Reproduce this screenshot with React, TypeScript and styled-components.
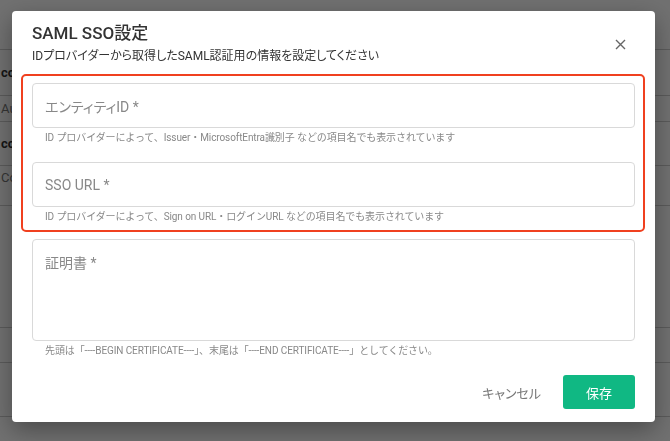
import * as React from "react";
import styled, { createGlobalStyle } from "styled-components";

const GlobalStyle = createGlobalStyle`
	html, body {
		margin: 0;
		padding: 0;
		width: 670px;
		height: 441px;
		overflow: hidden;
		background: #fff;
	}
	* {
		box-sizing: border-box;
	}
	body {
		font-family: Roboto, "Noto Sans CJK JP", sans-serif;
	}
`;

const font = `Roboto, "Noto Sans CJK JP", sans-serif`;

// background page behind the modal
const Page = styled.div`
	width: 670px;
	height: 441px;
	background: #fff;
	font-family: ${font};
	color: #333;
`;

const TableRow = styled.div<{ $h: number; $bold?: boolean; $top?: boolean }>`
	height: ${(p) => p.$h}px;
	border-bottom: 1px solid #cdcdcd;
	display: flex;
	align-items: ${(p) => (p.$top ? "flex-start" : "center")};
	padding: ${(p) => (p.$top ? "4px 0 0 1px" : "0 0 0 1px")};
	font-size: 13px;
	font-weight: ${(p) => (p.$bold ? 700 : 400)};
	color: ${(p) => (p.$bold ? "#333" : "#777")};
	overflow: hidden;
	white-space: nowrap;
`;

const Overlay = styled.div`
	position: fixed;
	inset: 0;
	background: rgba(0, 0, 0, 0.56);
`;

const Dialog = styled.div`
	position: absolute;
	top: 11px;
	left: 12px;
	width: 643px;
	height: 411px;
	background: #fff;
	border-radius: 4px;
	box-shadow: 0 8px 24px rgba(0, 0, 0, 0.35);
	padding: 10px 20px 13px;
	display: flex;
	flex-direction: column;
	font-family: ${font};
`;

const Header = styled.div`
	display: flex;
	justify-content: space-between;
	align-items: flex-start;
	font-feature-settings: "palt";
`;

const Title = styled.h2`
	margin: 0;
	font-size: 17px;
	line-height: 24px;
	font-weight: 500;
	color: #333;
`;

const Subtitle = styled.p`
	margin: 2px 0 0;
	font-size: 12px;
	line-height: 18px;
	color: #333;
`;

const CloseButton = styled.button`
	border: none;
	background: none;
	padding: 0;
	margin: 17px 9px 0 0;
	width: 12px;
	height: 12px;
	display: flex;
	align-items: center;
	justify-content: center;
	cursor: pointer;
`;

const Highlight = styled.div`
	margin: 9px -10px 0 -11px;
	padding: 7px 8px 6px 9px;
	border: 2px solid #f0401f;
	border-radius: 5px;
	display: flex;
	flex-direction: column;
	gap: 17px;
`;

const Field = styled.div<{ $mt?: number }>`
	margin-top: ${(p) => p.$mt ?? 0}px;
	display: flex;
	flex-direction: column;
`;

const Input = styled.div`
	height: 45px;
	border: 1px solid #d9d9d9;
	border-radius: 4px;
	padding: 0 12px;
	display: flex;
	align-items: center;
	font-size: 14px;
	color: #888;
	font-feature-settings: "palt";
`;

const TextArea = styled.div`
	height: 102px;
	border: 1px solid #d9d9d9;
	border-radius: 4px;
	padding: 13px 12px;
	font-size: 14px;
	line-height: 20px;
	color: #888;
`;

const Helper = styled.div`
	margin-top: 3px;
	padding-left: 13px;
	font-size: 10px;
	line-height: 14px;
	letter-spacing: -0.1px;
	color: #888;
	white-space: nowrap;
`;

const Footer = styled.div`
	margin-top: auto;
	display: flex;
	justify-content: flex-end;
	align-items: center;
	gap: 22px;
	font-feature-settings: "palt";
`;

const TextButton = styled.button`
	border: none;
	background: none;
	font-family: ${font};
	font-feature-settings: "palt";
	font-size: 13px;
	color: #777;
	padding: 0;
`;

const PrimaryButton = styled.button`
	width: 72px;
	height: 34px;
	border: none;
	border-radius: 3px;
	background: #10b883;
	color: #fff;
	font-family: ${font};
	font-size: 13px;
`;

const rows = [
	{ h: 50, text: "" },
	{ h: 46, text: "co", bold: true },
	{ h: 26, text: " Au" },
	{ h: 44, text: "cc", bold: true },
	{ h: 40, text: "Cor", top: true },
	{ h: 122, text: "" },
	{ h: 35, text: "" },
	{ h: 54, text: "" },
];

const App = () => {
	return (
		<>
			<GlobalStyle />
			<Page>
				{rows.map((r, i) => (
					<TableRow key={i} $h={r.h} $bold={r.bold} $top={r.top}>
						{r.text}
					</TableRow>
				))}
			</Page>
			<Overlay>
				<Dialog>
					<Header>
						<div>
							<Title>SAML SSO設定</Title>
							<Subtitle>IDプロバイダーから取得したSAML認証用の情報を設定してください</Subtitle>
						</div>
						<CloseButton aria-label="close">
							<svg width="11" height="11" viewBox="0 0 11 11">
								<path d="M1 1 L10 10 M10 1 L1 10" stroke="#666" strokeWidth="1.4" />
							</svg>
						</CloseButton>
					</Header>

					<Highlight>
						<Field>
							<Input>エンティティID *</Input>
							<Helper>ID プロバイダーによって、Issuer・MicrosoftEntra識別子 などの項目名でも表示されています</Helper>
						</Field>
						<Field>
							<Input>SSO URL *</Input>
							<Helper>ID プロバイダーによって、Sign on URL・ログインURL などの項目名でも表示されています</Helper>
						</Field>
					</Highlight>

					<Field $mt={7}>
						<TextArea>証明書 *</TextArea>
						<Helper>先頭は「----BEGIN CERTIFICATE----」、末尾は「----END CERTIFICATE----」としてください。</Helper>
					</Field>

					<Footer>
						<TextButton>キャンセル</TextButton>
						<PrimaryButton>保存</PrimaryButton>
					</Footer>
				</Dialog>
			</Overlay>
		</>
	);
};

export default App;
